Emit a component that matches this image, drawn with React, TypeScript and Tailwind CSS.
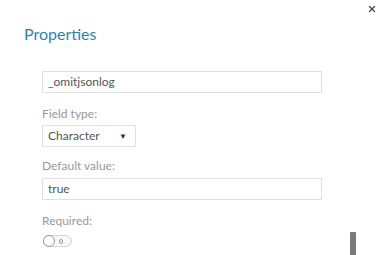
import { X } from "lucide-react";

function Label({ children }: { children: string }) {
  return <div className="text-[12px] leading-[16px] text-[#999]">{children}</div>;
}

function TextBox({ value }: { value: string }) {
  return (
    <div className="flex h-[22px] w-[280px] items-center border border-[#e0e0e0] px-[5px] text-[12px] text-[#555]">
      {value}
    </div>
  );
}

export default function App() {
  return (
    <div
      className="relative h-[255px] w-[384px] overflow-hidden bg-white"
      style={{ fontFamily: "Lato, 'Open Sans', sans-serif" }}
    >
      <button className="absolute right-[7px] top-[4px] text-[#444]">
        <X size={10} strokeWidth={3} />
      </button>

      <h1 className="pl-[24px] pt-[24px] text-[16px] leading-[20px] text-[#2f84ad]">
        Properties
      </h1>

      <div className="ml-[42px] mt-[27px] flex flex-col">
        <TextBox value="_omitjsonlog" />

        <div className="mt-[13px]">
          <Label>Field type:</Label>
        </div>
        <div className="mt-[3px] flex h-[22px] w-[94px] items-center justify-between border border-[#e0e0e0] pl-[5px] pr-[8px] text-[12px] text-[#555]">
          <span>Character</span>
          <span className="text-[8px] text-[#333]">▼</span>
        </div>

        <div className="mt-[11px]">
          <Label>Default value:</Label>
        </div>
        <div className="mt-[4px]">
          <TextBox value="true" />
        </div>

        <div className="mt-[13px]">
          <Label>Required:</Label>
        </div>
        <div className="ml-[1px] mt-[6px] flex h-[12px] w-[29px] items-center rounded-full border border-[#d4d4d4] bg-[#f7f7f7]">
          <span className="-ml-px h-[12px] w-[12px] rounded-full border border-[#9a9a9a] bg-white" />
          <span className="ml-[4px] h-[5px] w-[4px] rounded-full border border-[#999]" />
        </div>
      </div>

      <div className="absolute left-[350px] top-[232px] h-[30px] w-[6px] rounded-t-[1px] bg-[#7a7a7a]" />
    </div>
  );
}
